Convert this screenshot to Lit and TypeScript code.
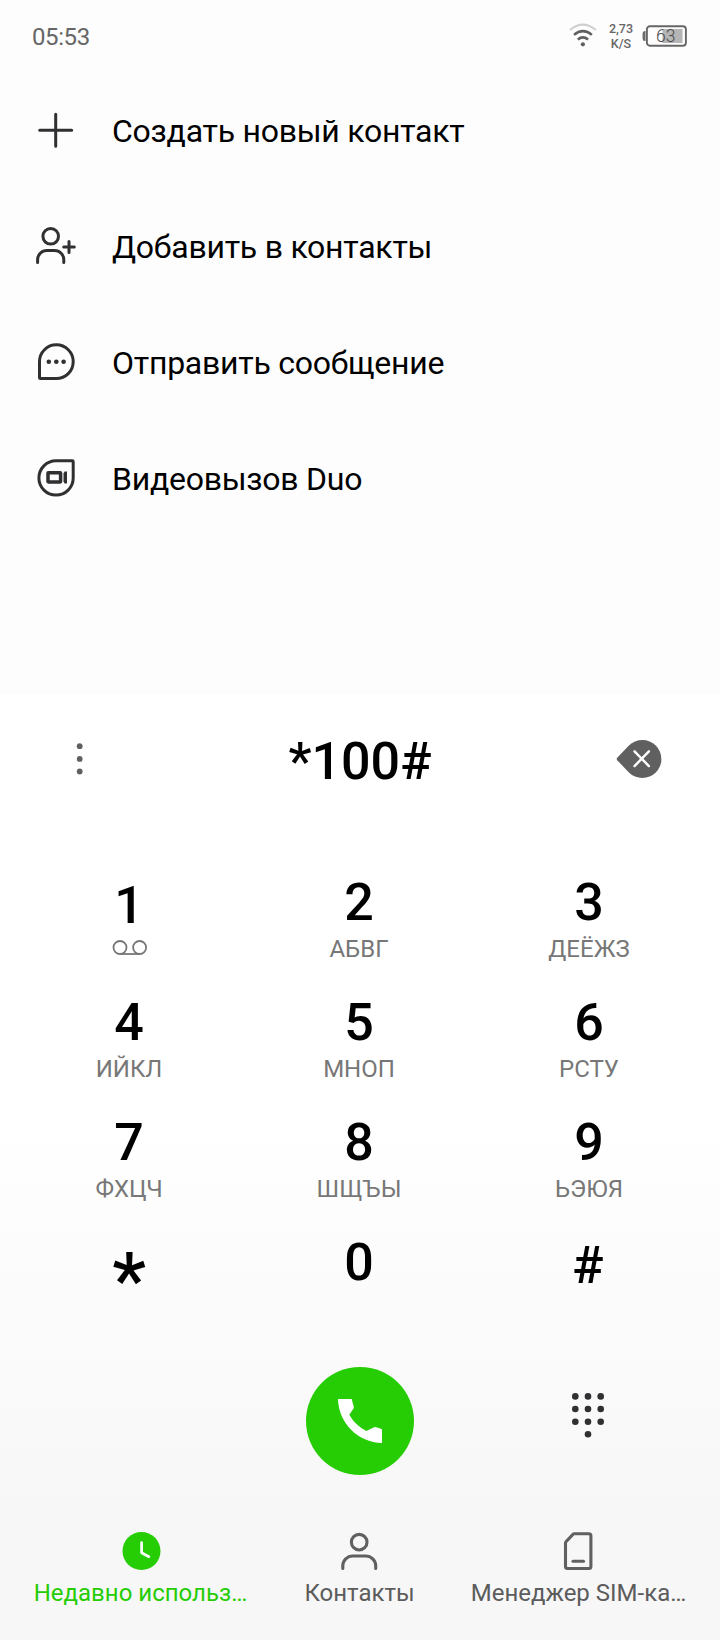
import { LitElement, html, css, svg, nothing } from "lit";
import { customElement } from "lit/decorators.js";

const plusIcon = svg`<path d="M23.7 7.3v32M7.7 23.3h32"/>`;
const addPersonIcon = svg`
  <circle cx="18.7" cy="13.3" r="7.8"/>
  <path d="M5.6 39.5v-2.7a9.2 9.2 0 0 1 9.2-9.2h7.8a9.2 9.2 0 0 1 9.2 9.2v2.7M37 18.500v11M31.700 24h10.600"/>`;
const messageIcon = svg`
  <path d="M7.5 38.7V22.6a16.85 16.85 0 1 1 16.85 16.9H8.3a.8.8 0 0 1-.8-.8z"/>
  <g class="solid"><circle cx="16.8" cy="22.7" r="2.3"/><circle cx="24.3" cy="22.7" r="2.3"/><circle cx="31.6" cy="22.7" r="2.3"/></g>`;
const duoIcon = svg`
  <path d="M40.3 5.8H24a17.15 17.15 0 1 0 17.2 17.15V6.7a.9.9 0 0 0-.9-.9z"/>
  <rect x="16" y="17.7" width="12.6" height="9.3" rx=".4" stroke-width="3.500"/>
  <path class="solid" d="M31.500 18.500 32.600 16.600H35v12H32.600L31.500 26.600z"/>`;

const actions = [
  { icon: plusIcon, label: "Создать новый контакт" },
  { icon: addPersonIcon, label: "Добавить в контакты" },
  { icon: messageIcon, label: "Отправить сообщение" },
  { icon: duoIcon, label: "Видеовызов Duo" },
];

const keys = [
  ["1", ""], ["2", "АБВГ"], ["3", "ДЕЁЖЗ"],
  ["4", "ИЙКЛ"], ["5", "МНОП"], ["6", "РСТУ"],
  ["7", "ФХЦЧ"], ["8", "ШЩЪЫ"], ["9", "ЬЭЮЯ"],
  ["*", ""], ["0", ""], ["#", ""],
];

@customElement("app-root")
export class AppRoot extends LitElement {
  static styles = css`
    :host {
      display: flex;
      flex-direction: column;
      width: 720px;
      height: 1640px;
      overflow: hidden;
      background: #fdfdfd;
      color: #000;
      font-family: Roboto, sans-serif;
    }
    * { box-sizing: border-box; }
    svg { display: block; flex: none; }
    button {
      border: 0;
      padding: 0;
      margin: 0;
      background: none;
      color: inherit;
      font: inherit;
    }
    .status {
      display: flex;
      height: 73px;
      padding: 0 33px 0 32px;
      color: #666;
    }
    .time { font-size: 24px; line-height: 28px; padding-top: 23px; flex: 1; letter-spacing: -0.4px; }
    .wifi { margin: 22px 11px 0 0; }
    .speed {
      width: 26px;
      margin: 21px 8px 0 0;
      font-size: 12.5px;
      font-weight: 500;
      line-height: 15px;
      text-align: center;
      white-space: nowrap;
    }
    .battery { margin-top: 24px; }
    .battery text { font: 300 17.5px Roboto, sans-serif; fill: #4a4a4a; }
    .actions { height: 621px; }
    .action {
      display: flex;
      align-items: center;
      width: 100%;
      height: 116px;
      padding-left: 32px;
      gap: 31px;
      font-size: 32px;
      line-height: 38px;
      letter-spacing: -0.25px;
      text-align: left;
    }
    .line {
      fill: none;
      stroke: #303033;
      stroke-width: 3;
      stroke-linecap: round;
      stroke-linejoin: round;
    }
    .solid { fill: #303033; stroke: none; }
    .sheet {
      flex: 1;
      background: linear-gradient(#fff 0, #fff 421px, #f7f7f7 821px);
    }
    .display {
      display: flex;
      align-items: center;
      justify-content: space-between;
      height: 130px;
      padding: 0 58px 0 60px;
    }
    .number { font-size: 52px; font-weight: 500; line-height: 60px; padding: 6px 0 0 4px; }
    .keypad {
      display: grid;
      grid-template-columns: repeat(3, 230px);
      grid-auto-rows: 120px;
      padding: 49px 0 0 14px;
    }
    .key { display: flex; flex-direction: column; align-items: center; gap: 1px; }
    .digit { font-size: 52px; font-weight: 500; line-height: 60px; }
    .letters { font-size: 24px; line-height: 30px; color: #777; }
    .lowered { padding-top: 3px; }
    .hash { padding-right: 2px; }
    .star { font-size: 76px; line-height: 94px; }
    .voicemail { margin: 3px 0 0 1px; fill: none; stroke: #777; stroke-width: 1.8; }
    .calls {
      display: grid;
      grid-template-columns: 230px 232px 228px;
      justify-items: center;
      height: 122px;
      padding: 14px 0 0 14px;
    }
    .call {
      grid-column: 2;
      display: flex;
      align-items: center;
      justify-content: center;
      width: 108px;
      height: 108px;
      border-radius: 50%;
      background: #26cc04;
    }
    .toggle { align-self: start; margin: 26px 4px 0 0; }
    .nav {
      display: grid;
      grid-template-columns: repeat(3, 219px);
      padding: 56px 0 0 31px;
      color: #5c5c5c;
    }
    .tab {
      display: flex;
      flex-direction: column;
      align-items: center;
      gap: 7px;
      font-size: 24px;
      line-height: 30px;
      white-space: nowrap;
    }
    .tab svg { fill: none; stroke: #606062; stroke-width: 3.1; stroke-linecap: round; stroke-linejoin: round; }
    .active { color: #26cc04; }
  `;

  private renderStatus() {
    return html`
      <header class="status">
        <span class="time">05:53</span>
        <svg class="wifi" width="28" height="26" viewBox="0 0 28 26" fill="none" stroke="#5f5f5f" stroke-width="2.5">
          <path d="M1 7.9q12.9-10.6 25.8 0" stroke="#cfcfcf" stroke-width="2"/>
          <path d="M5 12.9q8.9-7.6 17.9 0M8.8 17.5q5.1-4.2 10.3 0"/>
          <circle cx="13.9" cy="22.3" r="2.1" fill="#5f5f5f" stroke="none"/>
        </svg>
        <div class="speed"><div>2,73</div><div>K/S</div></div>
        <svg class="battery" width="45" height="24" viewBox="0 0 45 24">
          <path d="M3.500 7v10H2.800Q.6 17 .6 14.500V9.500Q.6 7 2.800 7z" fill="#6a6a6a"/>
          <rect x="4.900" y="2.200" width="39" height="19.600" rx="3" fill="none" stroke="#666" stroke-width="1.900"/>
          <rect x="20.500" y="5" width="20" height="14" fill="#b5b5b5"/>
          <text x="14" y="18">63</text>
        </svg>
      </header>`;
  }

  private renderKey([digit, letters]: string[]) {
    const lowered = digit === "1" || digit === "#";
    return html`
      <button class="key ${lowered ? "lowered" : ""} ${digit === "#" ? "hash" : ""}">
        <span class="digit ${digit === "*" ? "star" : ""}">${digit}</span>
        ${letters ? html`<span class="letters">${letters}</span>` : nothing}
        ${digit === "1"
          ? html`<svg class="voicemail" width="36" height="16" viewBox="0 0 36 16">
              <circle cx="8" cy="7.500" r="6.500"/><circle cx="27.600" cy="7.500" r="6.500"/><path d="M8 14h19.600"/>
            </svg>`
          : nothing}
      </button>`;
  }

  render() {
    return html`
      ${this.renderStatus()}
      <nav class="actions">
        ${actions.map(
          (a) => html`<button class="action">
            <svg class="line" width="49" height="48" viewBox="0 0 49 48">${a.icon}</svg>
            <span>${a.label}</span>
          </button>`
        )}
      </nav>
      <main class="sheet">
        <div class="display">
          <svg width="40" height="40" viewBox="0 0 40 40" fill="#606062">
            <circle cx="19.700" cy="7.200" r="2.900"/><circle cx="19.700" cy="19.900" r="2.900"/><circle cx="19.700" cy="32.500" r="2.900"/>
          </svg>
          <span class="number">*100#</span>
          <svg width="46" height="40" viewBox="0 0 46 40">
            <path d="M1.200 18.800 12.900 6.600A19 19 0 1 1 12.900 33.400L1.200 21.200Q.2 20 1.200 18.800z" fill="#606060"/>
            <path d="m18.500 12.300 14.400 14.800m0-14.800L18.500 27.100" stroke="#fff" stroke-width="2.400" stroke-linecap="round"/>
          </svg>
        </div>
        <div class="keypad">${keys.map((k) => this.renderKey(k))}</div>
        <div class="calls">
          <button class="call">
            <svg width="44" height="44" viewBox="0 0 44 44" fill="#fff">
              <path d="M0 0h13.700L16 8.700 11.300 15.700Q17 26 28.300 32L36.700 28Q40 28.300 44 30.300V44C20 43.500.5 24 0 0z"/>
            </svg>
          </button>
          <svg class="toggle" width="34" height="46" viewBox="0 0 34 46" fill="#303033">
            ${[3.4, 16, 28.7].map((y) =>
              [4.3, 17, 29.7].map((x) => svg`<circle cx=${x} cy=${y} r="3.300"/>`)
            )}
            <circle cx="17" cy="41.300" r="3.300"/>
          </svg>
        </div>
        <nav class="nav">
          <button class="tab active">
            <svg width="40" height="40" viewBox="0 0 40 40">
              <circle cx="20.500" cy="20" r="19" fill="#26cc04" stroke="none"/>
              <path d="M20.600 11.500v10.200l7.300 4" stroke="#fff" stroke-width="2.700"/>
            </svg>
            <span>Недавно использ…</span>
          </button>
          <button class="tab">
            <svg width="40" height="40" viewBox="0 0 40 40">
              <circle cx="19.200" cy="11.200" r="7.800"/>
              <path d="M2.800 37.500V35a10 10 0 0 1 10-10h12.900a10 10 0 0 1 10 10v2.500"/>
            </svg>
            <span>Контакты</span>
          </button>
          <button class="tab">
            <svg width="40" height="40" viewBox="0 0 40 40">
              <path d="M15.200 2.800H29.900a2 2 0 0 1 2 2V35.500a2 2 0 0 1-2 2H8.500a2 2 0 0 1-2-2V12.300Q6.500 11.300 7.200 10.500L13.700 3.600Q14.400 2.800 15.200 2.800z"/>
              <path d="M14 30.200h10.500"/>
            </svg>
            <span>Менеджер SIM-ка…</span>
          </button>
        </nav>
      </main>`;
  }
}
